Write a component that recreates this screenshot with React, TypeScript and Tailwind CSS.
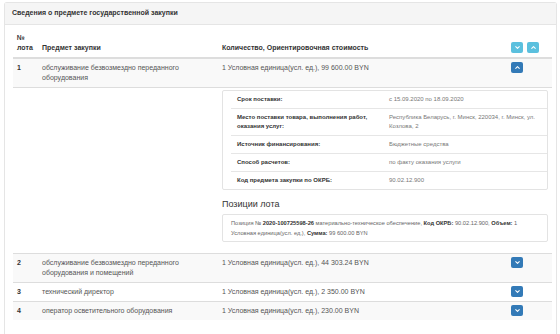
import { ChevronDown, ChevronUp } from "lucide-react";

type Lot = {
  no: number;
  subject: string;
  amount: string;
  open?: boolean;
};

const lots: Lot[] = [
  {
    no: 1,
    subject: "обслуживание безвозмездно переданного оборудования",
    amount: "1 Условная единица(усл. ед.), 99 600.00 BYN",
    open: true,
  },
  {
    no: 2,
    subject: "обслуживание безвозмездно переданного оборудования и помещений",
    amount: "1 Условная единица(усл. ед.), 44 303.24 BYN",
  },
  {
    no: 3,
    subject: "технический директор",
    amount: "1 Условная единица(усл. ед.), 2 350.00 BYN",
  },
  {
    no: 4,
    subject: "оператор осветительного оборудования",
    amount: "1 Условная единица(усл. ед.), 230.00 BYN",
  },
];

const details: [string, string][] = [
  ["Срок поставки:", "с 15.09.2020 по 18.09.2020"],
  [
    "Место поставки товара, выполнения работ, оказания услуг:",
    "Республика Беларусь, г. Минск, 220034, г. Минск, ул. Козлова, 2",
  ],
  ["Источник финансирования:", "Бюджетные средства"],
  ["Способ расчетов:", "по факту оказания услуги"],
  ["Код предмета закупки по ОКРБ:", "90.02.12.900"],
];

function ToggleButton({ up, light }: { up?: boolean; light?: boolean }) {
  const Icon = up ? ChevronUp : ChevronDown;
  return (
    <span
      className={
        light
          ? "inline-flex h-[11px] w-[12px] items-center justify-center rounded-[2px] bg-[#5bc0de] text-white"
          : "inline-flex h-[11px] w-[12px] items-center justify-center rounded-[2px] bg-[#337ab7] text-white"
      }
    >
      <Icon size={7} strokeWidth={3.5} />
    </span>
  );
}

function LotDetails() {
  return (
    <div>
      <div className="rounded-[2px] border border-[#e3e3e3] bg-white pl-[8px]">
        {details.map(([label, value], i) => (
          <div
            key={label}
            className={
              i === 0
                ? "grid grid-cols-[152px_1fr] py-[4px] text-[6px] leading-[9px]"
                : "grid grid-cols-[152px_1fr] border-t border-[#e6e6e6] py-[4px] text-[6px] leading-[9px]"
            }
          >
            <div className="pl-[6px] pr-[8px] font-bold text-[#333]">{label}</div>
            <div className="pl-[6px] pr-[6px] text-[#777]">{value}</div>
          </div>
        ))}
      </div>

      <h4 className="mt-[9px] mb-[5px] text-[9px] leading-[10px] text-[#333]">Позиции лота</h4>

      <div className="rounded-[2px] border border-[#e3e3e3] px-[8px] py-[3px] text-[5.7px] leading-[10px] text-[#666]">
        Позиция № <b className="text-[#333]">2020-100725598-26</b> материально-техническое обеспечение,{" "}
        <b className="text-[#333]">Код ОКРБ:</b> 90.02.12.900, <b className="text-[#333]">Объем:</b> 1
        Условная единица(усл. ед.), <b className="text-[#333]">Сумма:</b> 99 600.00 BYN
      </div>
    </div>
  );
}

export default function App() {
  return (
    <div className="min-h-[334px] bg-white pt-[2px] font-['Liberation_Sans',Arial,sans-serif] text-[#333]">
      <div className="ml-[4px] mr-[3px] min-h-[332px] rounded-t-[3px] border border-b-0 border-[#e5e5e5]">
        <div className="flex h-[22px] items-center border-b border-[#e5e5e5] bg-[#f5f5f5] px-[7px] text-[7px] font-bold">
          Сведения о предмете государственной закупки
        </div>

        <div className="pl-[8px] pr-[4px] pt-[4px]">
          <table className="w-full table-fixed border-collapse text-[7px] leading-[10px]">
            <colgroup>
              <col className="w-[25px]" />
              <col className="w-[180px]" />
              <col />
              <col className="w-[45px]" />
            </colgroup>
            <thead>
              <tr className="border-b-2 border-[#ddd] align-bottom">
                <th className="p-[4px] text-left font-bold">
                  №
                  <br />
                  лота
                </th>
                <th className="p-[4px] text-left font-bold">Предмет закупки</th>
                <th className="p-[4px] text-left font-bold">Количество, Ориентировочная стоимость</th>
                <th className="p-[4px] text-left">
                  <div className="flex gap-[4px]">
                    <ToggleButton light />
                    <ToggleButton light up />
                  </div>
                </th>
              </tr>
            </thead>
            <tbody>
              {lots.map((lot) => {
                // striping counts the details row, so lot 3 falls on a white row
                const bg = lot.no === 3 ? "bg-white" : "bg-[#f9f9f9]";
                return [
                  <tr key={lot.no} className={`border-t border-[#ddd] align-top ${bg}`}>
                    <td className="p-[4px] font-bold text-[#333]">{lot.no}</td>
                    <td className="p-[4px] pr-[24px] text-[#555]">{lot.subject}</td>
                    <td className="p-[4px] text-[#555]">{lot.amount}</td>
                    <td className="px-[4px] pt-[3px]">
                      <ToggleButton up={lot.open} />
                    </td>
                  </tr>,
                  lot.open ? (
                    <tr key={`${lot.no}-details`} className="border-t border-[#ddd] bg-white">
                      <td colSpan={2} />
                      <td colSpan={2} className="px-[4px] pt-[2px] pb-[11px]">
                        <LotDetails />
                      </td>
                    </tr>
                  ) : null,
                ];
              })}
            </tbody>
          </table>
        </div>
      </div>
    </div>
  );
}
